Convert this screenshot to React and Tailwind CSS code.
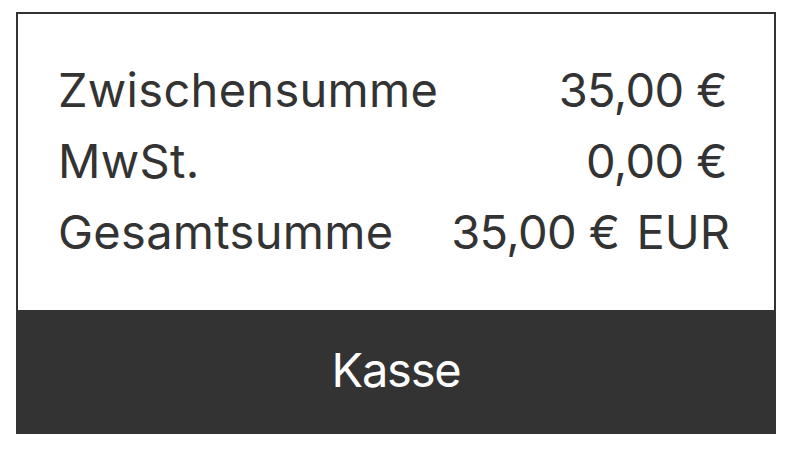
export default function App() {
  return (
    <div className="w-[790px] h-[450px] bg-white pt-[12px] pl-[16px]" style={{ fontFamily: 'Inter, "Liberation Sans", Arial, sans-serif' }}>
      <div className="w-[760px] flex flex-col">
        <div className="h-[298px] border-2 border-b-0 border-[#333333] pt-[40px] pl-[40px] pr-[44px] text-[#333333] text-[47px] leading-[71px]">
          <div className="flex justify-between">
            <span className="tracking-[0.3px]">Zwischensumme</span>
            <span className="pr-[3px] tracking-[-0.6px]">35,00 €</span>
          </div>
          <div className="flex justify-between">
            <span className="tracking-[0.3px]">MwSt.</span>
            <span className="pr-[3px] tracking-[-0.6px]">0,00 €</span>
          </div>
          <div className="flex justify-between">
            <span className="tracking-[0.3px]">Gesamtsumme</span>
            <span>
              <span className="tracking-[-0.6px]">35,00 €</span>
              <span className="ml-[17px]">EUR</span>
            </span>
          </div>
        </div>
        <div className="h-[124px] bg-[#333333] flex items-center justify-center text-white text-[47px] tracking-[-1.2px] pb-[4px]">
          Kasse
        </div>
      </div>
    </div>
  );
}
